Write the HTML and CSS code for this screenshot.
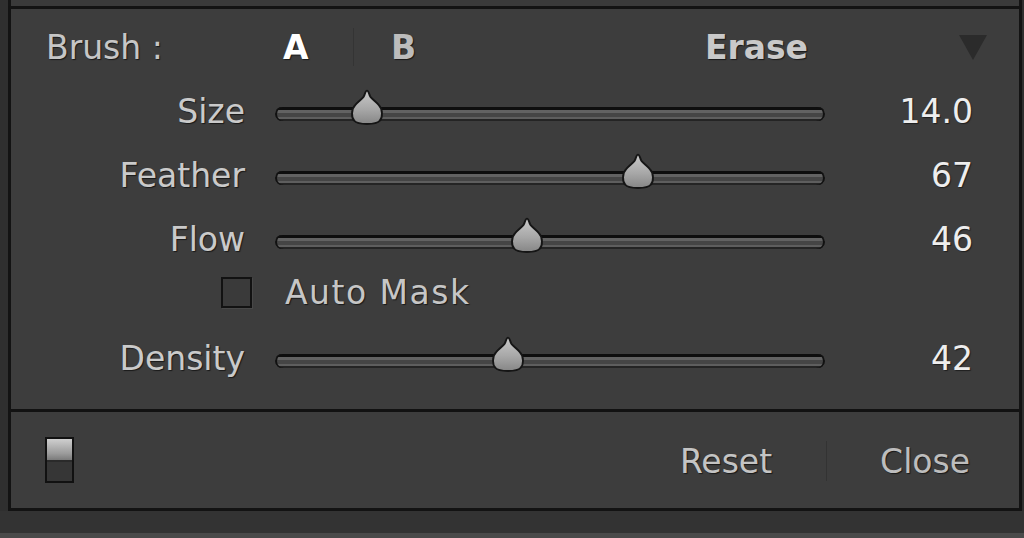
FILE: index.html
```html
<!DOCTYPE html>
<html>
<head>
<meta charset="utf-8">
<link rel="stylesheet" href="styles.css">
</head>
<body>
<div class="screen">
  <div class="prev"></div>
  <div class="panel">
    <div class="main">
      <div class="header">
        <span class="brush">Brush :</span>
        <span class="mode mode-a">A</span>
        <span class="hsep"></span>
        <span class="mode mode-b">B</span>
        <span class="erase">Erase</span>
        <svg class="tri" width="30" height="27" viewBox="0 0 30 27"><polygon points="1,1 29,1 15,26" fill="#2b2b2b"/></svg>
      </div>

      <div class="row">
        <span class="label">Size</span>
        <div class="track"><svg class="thumb" style="left:16.7%" width="34" height="36" viewBox="0 0 32 34"><use href="#drop"/></svg></div>
        <span class="value">14.0</span>
      </div>
      <div class="row">
        <span class="label">Feather</span>
        <div class="track"><svg class="thumb" style="left:66%" width="34" height="36" viewBox="0 0 32 34"><use href="#drop"/></svg></div>
        <span class="value">67</span>
      </div>
      <div class="row">
        <span class="label">Flow</span>
        <div class="track"><svg class="thumb" style="left:45.8%" width="34" height="36" viewBox="0 0 32 34"><use href="#drop"/></svg></div>
        <span class="value">46</span>
      </div>
      <div class="check-row">
        <span class="checkbox"></span>
        <span class="check-label">Auto Mask</span>
      </div>
      <div class="row row-density">
        <span class="label">Density</span>
        <div class="track"><svg class="thumb" style="left:42.4%" width="34" height="36" viewBox="0 0 32 34"><use href="#drop"/></svg></div>
        <span class="value">42</span>
      </div>
    </div>
    <div class="footer">
      <span class="toggle"><span class="toggle-top"></span></span>
      <span class="btn reset">Reset</span>
      <span class="fsep"></span>
      <span class="btn close">Close</span>
    </div>
  </div>
  <div class="below"></div>
  <div class="bottom-strip"></div>
</div>

<svg width="0" height="0" style="position:absolute">
  <defs>
    <linearGradient id="dropGrad" x1="0" y1="0" x2="0" y2="1">
      <stop offset="0" stop-color="#c8c8c8"/>
      <stop offset="0.55" stop-color="#a8a8a8"/>
      <stop offset="1" stop-color="#868686"/>
    </linearGradient>
    <symbol id="drop" viewBox="0 0 32 34">
      <path d="M16 1.5 C17.5 1.5 18 5 19 7 C20.5 9.5 24 11.5 27 15 C31 19 31 27 28 30 C26 32.5 21 33 16 33 C11 33 6 32.5 4 30 C1 27 1 19 5 15 C8 11.5 11.5 9.5 13 7 C14 5 14.5 1.5 16 1.5 Z" fill="url(#dropGrad)" stroke="#151515" stroke-width="1.8"/>
    </symbol>
  </defs>
</svg>
</body>
</html>
```

FILE: styles.css
```css
* { box-sizing: border-box; }

html, body {
  margin: 0;
  padding: 0;
}

body {
  width: 1024px;
  height: 538px;
  overflow: hidden;
  background: #2f2f2f;
  font-family: "DejaVu Sans", Verdana, sans-serif;
  font-size: 33px;
  color: #c8c8c8;
}

.screen {
  display: flex;
  flex-direction: column;
  height: 538px;
  background: #2f2f2f;
}

.prev {
  height: 6px;
  margin-left: 8px;
  margin-right: 2px;
  background: #3a3a3a;
  border-left: 3px solid #141414;
  border-right: 3px solid #141414;
}

.panel {
  margin-left: 8px;
  margin-right: 2px;
  border: 3px solid #131313;
  background: #3d3d3d;
  display: flex;
  flex-direction: column;
}

.main {
  height: 403px;
  padding-top: 6px;
  border-bottom: 3px solid #121212;
  display: flex;
  flex-direction: column;
}

.header {
  height: 64px;
  display: flex;
  align-items: center;
  padding-left: 35px;
  padding-right: 31px;
  line-height: 1;
  text-shadow: 1px 1px 1px rgba(0,0,0,0.6);
}

.brush {
  width: 237px;
  color: #c6c6c6;
}

.mode {
  font-weight: bold;
}

.mode-a {
  color: #ffffff;
  width: 28px;
}

.hsep {
  width: 1px;
  height: 38px;
  margin-left: 42px;
  background: #343434;
}

.mode-b {
  color: #bcbcbc;
  margin-left: 37px;
}

.erase {
  margin-left: auto;
  font-weight: bold;
  color: #c9c9c9;
}

.tri {
  margin-left: 150px;
  display: block;
}

.row {
  height: 64px;
  display: flex;
  align-items: center;
  line-height: 1;
}

.label {
  width: 234px;
  text-align: right;
  color: #cacaca;
  text-shadow: 1px 1px 1px rgba(0,0,0,0.6);
}

.track {
  position: relative;
  width: 550px;
  height: 14px;
  margin-left: 30px;
  margin-top: 5px;
  border-radius: 7px;
  background: linear-gradient(to bottom,
    #0e0e0e 0, #0e0e0e 3px,
    #626262 3px, #626262 6px,
    #454545 6px, #454545 10px,
    #5e5e5e 10px, #5e5e5e 12px,
    #242424 12px);
  box-shadow: inset 2px 0 0 #111, inset -2px 0 0 #111;
}

.thumb {
  position: absolute;
  top: -18px;
  transform: translateX(-50%);
  display: block;
}

.value {
  width: 148px;
  text-align: right;
  color: #eeeeee;
  text-shadow: 1px 1px 1px rgba(0,0,0,0.5);
}

.check-row {
  height: 42px;
  display: flex;
  align-items: center;
  padding-left: 210px;
  line-height: 1;
}

.checkbox {
  width: 31px;
  height: 31px;
  border: 2px solid #121212;
  background: #3a3a3a;
  box-shadow: 1px 1px 0 rgba(255,255,255,0.06);
}

.check-label {
  margin-left: 33px;
  color: #c6c6c6;
  letter-spacing: 1.5px;
  text-shadow: 1px 1px 1px rgba(0,0,0,0.6);
}

.row-density {
  margin-top: 13px;
}

.footer {
  height: 96px;
  display: flex;
  align-items: center;
  padding-left: 34px;
  padding-right: 49px;
  padding-top: 2px;
  line-height: 1;
}

.toggle {
  width: 29px;
  height: 46px;
  border: 2px solid #111;
  background: #363636;
  display: flex;
  flex-direction: column;
  margin-top: -2px;
}

.toggle-top {
  height: 23px;
  background: linear-gradient(to bottom, #cfcfcf, #9a9a9a 70%, #7a7a7a);
  border-bottom: 2px solid #2a2a2a;
}

.btn {
  color: #c4c4c4;
  text-shadow: 1px 1px 1px rgba(0,0,0,0.6);
}

.reset {
  margin-left: auto;
}

.fsep {
  width: 1px;
  height: 40px;
  margin-left: 54px;
  margin-right: 53px;
  background: #333333;
}

.close {
  color: #bdbdbd;
}

.below {
  height: 22px;
  background: #333333;
}

.bottom-strip {
  flex: 1;
  background: #4a4a4a;
}
```
